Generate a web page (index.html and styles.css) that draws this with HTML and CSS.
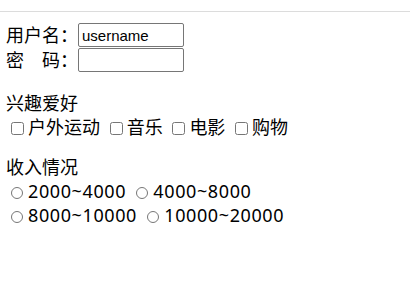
FILE: index.html
```html
<!DOCTYPE html>
<html lang="zh-CN">
<head>
    <meta charset="UTF-8">
    <meta name="viewport" content="width=device-width, initial-scale=1.0">
    <title>注册</title>
    <link rel="stylesheet" href="styles.css">
</head>
<body>

    <div class="topbar"></div>

    <form class="reg">
        <div class="row">
            <label class="field-name">用户名：</label>
            <input type="text" class="text-input" value="username">
        </div>
        <div class="row">
            <label class="field-name">密<span class="gap"></span>码：</label>
            <input type="password" class="text-input">
        </div>

        <div class="group-title">兴趣爱好</div>
        <div class="opts">
            <label><input type="checkbox" class="check">户外运动</label>
            <label><input type="checkbox" class="check">音乐</label>
            <label><input type="checkbox" class="check">电影</label>
            <label><input type="checkbox" class="check">购物</label>
        </div>

        <div class="group-title second">收入情况</div>
        <div class="opts nums">
            <label><input type="radio" class="radio" name="income">2000~4000</label>
            <label><input type="radio" class="radio" name="income">4000~8000</label>
        </div>
        <div class="opts nums">
            <label><input type="radio" class="radio" name="income">8000~10000</label>
            <label><input type="radio" class="radio" name="income">10000~20000</label>
        </div>
    </form>

</body>
</html>
```

FILE: styles.css
```css
body {
    margin: 0;
    font-family: "Noto Sans", "Noto Sans CJK SC", sans-serif;
    font-size: 18px;
    color: #000;
    background-color: #fff;
}

.topbar {
    height: 11px;
    border-bottom: 1px solid #dcdcdc;
}

.reg {
    padding: 11px 6px 0;
}

.row {
    display: flex;
    align-items: flex-start;
    height: 25px;
}

.field-name {
    width: 72px;
    line-height: 24px;
}

.gap {
    display: inline-block;
    width: 18px;
}

.text-input {
    box-sizing: border-box;
    width: 106px;
    height: 24px;
    margin: 0;
    padding: 1px 3px;
    border: 1px solid #767676;
    border-radius: 2px;
    font-family: "Liberation Sans", Arial, sans-serif;
    font-size: 15px;
    color: #000;
}

.group-title {
    margin-top: 18px;
    line-height: 24px;
}

.group-title.second {
    margin-top: 16px;
}

.opts {
    line-height: 24px;
    height: 24px;
}

.nums {
    letter-spacing: 0.6px;
}

.check {
    width: 13px;
    height: 13px;
    margin: 0 4px 0 5px;
    vertical-align: -1px;
}

.radio {
    width: 12px;
    height: 12px;
    margin: 0 5px 0 5px;
    vertical-align: -1px;
}
```
